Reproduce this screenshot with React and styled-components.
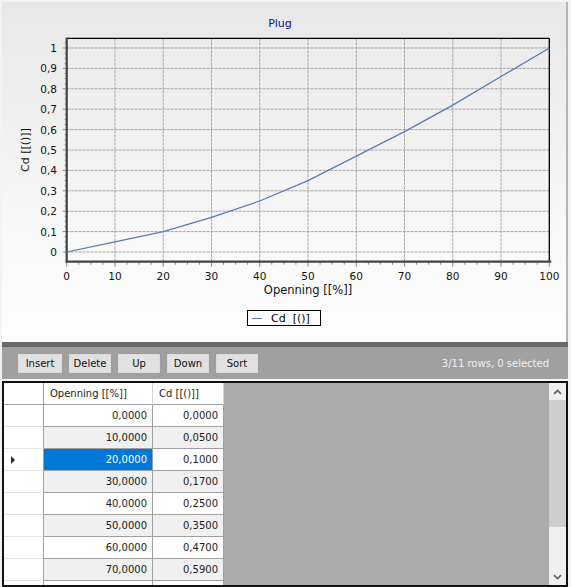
import React from 'react'
import styled, { createGlobalStyle } from 'styled-components'

const GlobalStyle = createGlobalStyle`
  html, body {
    margin: 0;
    padding: 0;
    background: #f3f3f3;
  }
  body {
    font-family: 'DejaVu Sans', Verdana, sans-serif;
  }
`

const points = [
  [0, 0], [10, 0.05], [20, 0.1], [30, 0.17], [40, 0.25], [50, 0.35],
  [60, 0.47], [70, 0.59], [80, 0.72], [90, 0.86], [100, 1],
]

// plot geometry, in svg units
const L = 64.7
const R = 547.3
const T = 6.3
const B = 229.7
const xOf = (v) => L + (v / 100) * (R - L)
const yOf = (c) => 220 - c * 204

const fmt = (n) => n.toFixed(4).replace('.', ',')

// rows that fit in the visible part of the grid
const VISIBLE_ROWS = 8

const Window = styled.div`
  width: 566px;
  height: 585px;
  margin: 2px 0 0 2px;
  display: flex;
  flex-direction: column;
  overflow: hidden;
`

const ChartPanel = styled.section`
  height: 340px;
  flex: none;
  box-sizing: border-box;
  border-right: 2px solid #b5b5b5;
  background: linear-gradient(#e8e8e8, #ffffff);
  display: flex;
  flex-direction: column;
  align-items: center;
`

const Title = styled.div`
  height: 30px;
  box-sizing: border-box;
  padding-top: 15px;
  margin-right: 8px;
  line-height: 14px;
  font-size: 11px;
  color: #0a0a88;
`

const Plot = styled.svg`
  display: block;
  width: 564px;
  height: 270px;
  font-family: 'DejaVu Sans', Verdana, sans-serif;
`

const Legend = styled.div`
  margin-top: 8px;
  width: 74px;
  height: 16px;
  box-sizing: border-box;
  border: 1px solid #000;
  display: flex;
  align-items: center;
  padding-left: 4px;
  gap: 9px;
  font-size: 11px;
  color: #000;
  white-space: pre;
`

const LegendLine = styled.span`
  width: 10px;
  height: 1px;
  background: #5878b8;
`

const Band = styled.div`
  height: 5px;
  flex: none;
  background: #696969;
`

const Toolbar = styled.div`
  height: 32px;
  flex: none;
  box-sizing: content-box;
  border-bottom: 2px solid #f4f4f4;
  background: #a0a0a0;
  display: flex;
  align-items: center;
  gap: 7px;
  padding: 0 19px 0 16px;
`

const Button = styled.button`
  width: ${(p) => p.$w}px;
  height: 19px;
  margin: 0;
  padding: 0;
  border: 1px solid #dadada;
  background: #e1e1e1;
  font-family: 'DejaVu Sans', Verdana, sans-serif;
  font-size: 10px;
  color: #111;
`

const Status = styled.span`
  margin-left: auto;
  font-size: 10px;
  color: #f0f0f0;
`

const Grid = styled.div`
  height: 206px;
  flex: none;
  box-sizing: border-box;
  border: 2px solid #111;
  background: #ababab;
  display: flex;
  overflow: hidden;
`

const Table = styled.div`
  flex: 1;
  display: grid;
  grid-template-columns: 40px 109px 71px;
  grid-auto-rows: 22px;
  align-content: start;
  font-size: 10px;
  color: #1b1b1b;
`

const Cell = styled.div`
  box-sizing: border-box;
  display: flex;
  align-items: center;
  justify-content: ${(p) => (p.$head ? 'flex-start' : 'flex-end')};
  padding: ${(p) => (p.$head ? '0 0 0 6px' : '0 5px 0 0')};
  border-right: 1px solid ${(p) => (p.$head ? '#d6d6d6' : '#a0a0a0')};
  border-bottom: 1px solid #a0a0a0;
  background: ${(p) => (p.$sel ? '#0078d7' : p.$alt ? '#f0f0f0' : '#ffffff')};
  color: ${(p) => (p.$sel ? '#ffffff' : '#1b1b1b')};
`

const RowHead = styled.div`
  box-sizing: border-box;
  display: flex;
  align-items: center;
  padding-left: 7px;
  background: #fff;
  border-right: 1px solid #a0a0a0;
  border-bottom: 1px solid ${(p) => (p.$top ? '#a0a0a0' : '#e4e4e4')};
`

const Pointer = styled.span`
  width: 0;
  height: 0;
  border-left: 4px solid #2a2a2a;
  border-top: 4px solid transparent;
  border-bottom: 4px solid transparent;
`

const Scrollbar = styled.div`
  width: 17px;
  flex: none;
  background: #f0f0f0;
  display: flex;
  flex-direction: column;
`

const Arrow = styled.div`
  height: 17px;
  flex: none;
  display: flex;
  align-items: center;
  justify-content: center;
  margin-top: ${(p) => (p.$down ? 'auto' : '0')};
`

const Thumb = styled.div`
  height: 127px;
  background: #cdcdcd;
`

const Chevron = ({ down }) => (
  <svg width="9" height="6" viewBox="0 0 9 6">
    <path
      d={down ? 'M1 1.2 L4.5 4.6 L8 1.2' : 'M1 4.8 L4.5 1.4 L8 4.8'}
      fill="none"
      stroke="#606060"
      strokeWidth="1.7"
    />
  </svg>
)

const Chart = () => {
  const yMajor = Array.from({ length: 11 }, (_, i) => i / 10)
  const xMajor = Array.from({ length: 11 }, (_, i) => i * 10)
  const yMinor = Array.from({ length: 43 }, (_, i) => i * 0.025)
  const xMinor = Array.from({ length: 41 }, (_, i) => i * 2.5)
  const curve = points.map(([x, c]) => `${xOf(x)},${yOf(c)}`).join(' ')

  return (
    <Plot viewBox="0 0 564 270">
      {yMajor.map((c) => (
        <line key={'gy' + c} x1={L} x2={R} y1={yOf(c)} y2={yOf(c)}
          stroke="#a3a3a3" strokeDasharray="3 1" />
      ))}
      {xMajor.slice(1, 10).map((v) => (
        <line key={'gx' + v} x1={xOf(v)} x2={xOf(v)} y1={T} y2={B}
          stroke="#a3a3a3" strokeDasharray="3 1" />
      ))}
      {yMinor.filter((c) => yOf(c) > T && yOf(c) < B).map((c, i) => (
        <line key={'ty' + i} x1={L - (i % 4 === 0 ? 4 : 2)} x2={L} y1={yOf(c)} y2={yOf(c)}
          stroke="#8a8a8a" />
      ))}
      {xMinor.map((v, i) => (
        <line key={'tx' + i} x1={xOf(v)} x2={xOf(v)} y1={B} y2={B + (i % 4 === 0 ? 5 : 3)}
          stroke="#8a8a8a" />
      ))}
      <line x1={L} x2={R} y1={T} y2={T} stroke="#000" strokeWidth="1.3" />
      <line x1={R} x2={R} y1={T} y2={B} stroke="#000" strokeWidth="1.3" />
      <line x1={L} x2={L} y1={T - 0.6} y2={B + 1} stroke="#444" strokeWidth="2.2" />
      <line x1={L - 1} x2={R + 2} y1={B} y2={B} stroke="#444" strokeWidth="2.2" />
      <polyline points={curve} fill="none" stroke="#5878b8" strokeWidth="1.2" />
      {yMajor.map((c) => (
        <text key={'ly' + c} x="55" y={yOf(c) + 4} textAnchor="end" fontSize="10.5" fill="#111">
          {c === 0 ? '0' : c === 1 ? '1' : c.toFixed(1).replace('.', ',')}
        </text>
      ))}
      {xMajor.map((v) => (
        <text key={'lx' + v} x={xOf(v)} y="248" textAnchor="middle" fontSize="10.5" fill="#111">
          {v}
        </text>
      ))}
      <text x="306" y="262" textAnchor="middle" fontSize="11.5" fill="#111">
        Openning [[%]]
      </text>
      <text x="27" y="118" textAnchor="middle" fontSize="11" fill="#111"
        transform="rotate(-90 27 118)">
        Cd [[()]]
      </text>
    </Plot>
  )
}

const App = () => {
  const rows = points.slice(0, VISIBLE_ROWS).map(([x, c]) => [fmt(x), fmt(c)])

  return (
    <>
      <GlobalStyle />
      <Window>
        <ChartPanel>
          <Title>Plug</Title>
          <Chart />
          <Legend>
            <LegendLine />
            <span>{'Cd  [()]'}</span>
          </Legend>
        </ChartPanel>
        <Band />
        <Toolbar>
          <Button $w={44}>Insert</Button>
          <Button $w={42}>Delete</Button>
          <Button $w={42}>Up</Button>
          <Button $w={42}>Down</Button>
          <Button $w={42}>Sort</Button>
          <Status>3/11 rows, 0 selected</Status>
        </Toolbar>
        <Grid>
          <Table>
            <RowHead $top />
            <Cell $head>Openning [[%]]</Cell>
            <Cell $head>Cd [[()]]</Cell>
            {rows.map(([a, b], i) => (
              <React.Fragment key={i}>
                <RowHead>{i === 2 && <Pointer />}</RowHead>
                <Cell $alt={i % 2 === 1} $sel={i === 2}>{a}</Cell>
                <Cell $alt={i % 2 === 1}>{b}</Cell>
              </React.Fragment>
            ))}
            <RowHead />
            <Cell />
            <Cell />
          </Table>
          <Scrollbar>
            <Arrow><Chevron /></Arrow>
            <Thumb />
            <Arrow $down><Chevron down /></Arrow>
          </Scrollbar>
        </Grid>
      </Window>
    </>
  )
}

export default App
